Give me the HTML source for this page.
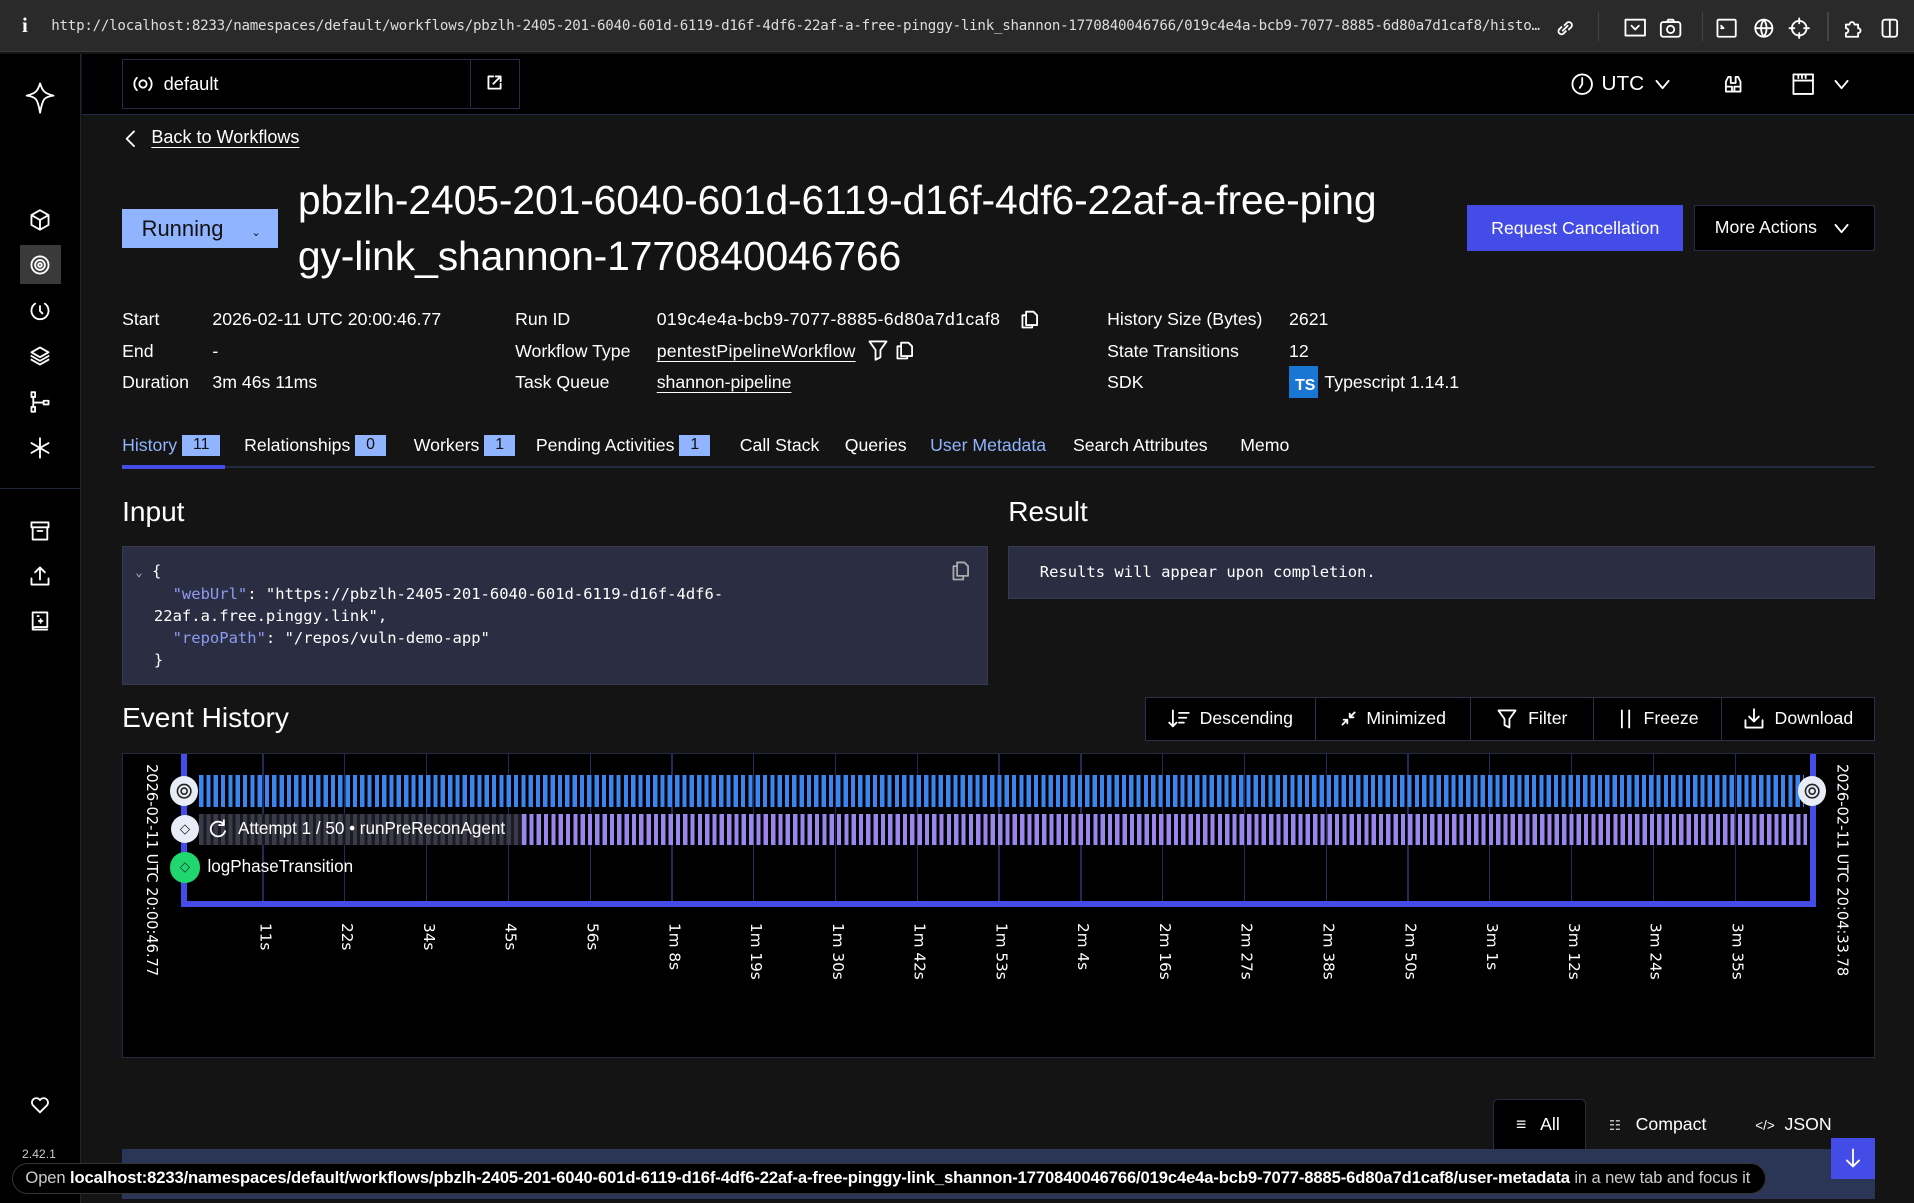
<!DOCTYPE html>
<html><head><meta charset="utf-8"><style>
*{box-sizing:border-box;margin:0;padding:0}
html,body{width:1914px;height:1203px;overflow:hidden;background:#141414}
#w{zoom:1.22066;width:1568px;height:986px;position:relative;font-family:"Liberation Sans",sans-serif;color:#fff;background:#141414;overflow:hidden}
.a{position:absolute}
.mono{font-family:"DejaVu Sans Mono","Liberation Mono",monospace}
svg{display:block}
.ic{stroke:#fff;fill:none;stroke-width:1.5;stroke-linecap:round;stroke-linejoin:round}
.lbl{font-size:14.5px;color:#fff}
.tab{position:absolute;top:356px;font-size:14.5px}
.badge{display:inline-block;background:#90b4ff;color:#111;font-size:13px;padding:0 9px;height:17px;line-height:17px;margin-left:4px;vertical-align:1px}
.tick{position:absolute;top:618px;width:1px;height:122px;background:#262a5a}
.tl{position:absolute;top:756px;writing-mode:vertical-rl;font-size:12.5px;color:#fff;font-family:"DejaVu Sans",sans-serif}
.btn{position:absolute;top:571px;height:36px;border:1px solid #2b3148;background:#000;font-size:14.5px;display:flex;align-items:center;justify-content:center;gap:8px}
</style></head><body><div id="w">
<div class="a" style="left:0;top:0;width:1568px;height:43px;background:#2a2a2a;border-bottom:1px solid #3a3a3a"></div>
<div class="a" style="left:18px;top:12px;font-size:17px;font-weight:bold;font-family:'Liberation Serif',serif">i</div>
<div class="a mono" style="left:42px;top:15px;font-size:11.6px;color:#ddd;white-space:nowrap;letter-spacing:-0.2px">http://localhost:8233/namespaces/default/workflows/pbzlh-2405-201-6040-601d-6119-d16f-4df6-22af-a-free-pinggy-link_shannon-1770840046766/019c4e4a-bcb9-7077-8885-6d80a7d1caf8/histo…</div>
<svg class="a" style="left:1272px;top:13px" width="20" height="20" viewBox="0 0 20 20"><path class="ic" d="M8 12l4-4M7 9l-2 2a2.5 2.5 0 003.5 3.5l2-2M13 11l2-2a2.5 2.5 0 00-3.5-3.5l-2 2"/></svg>
<div class="a" style="left:1309px;top:10px;width:1px;height:24px;background:#444"></div>
<svg class="a" style="left:1330px;top:13px" width="80" height="20" viewBox="0 0 80 20"><rect class="ic" x="2" y="3" width="16" height="13"/><path class="ic" d="M7 8l3 3 3-3"/><rect class="ic" x="31" y="5" width="16" height="12" rx="2"/><circle class="ic" cx="39" cy="11" r="3"/><path class="ic" d="M36 5l1-2h4l1 2"/></svg>
<div class="a" style="left:1394px;top:10px;width:1px;height:24px;background:#444"></div>
<svg class="a" style="left:1405px;top:13px" width="80" height="20" viewBox="0 0 80 20"><rect class="ic" x="2" y="3" width="15" height="14" rx="1"/><path class="ic" d="M5 8l2 2-2 0"/><circle class="ic" cx="40" cy="10" r="7"/><path class="ic" d="M33 10h14M40 3c-3 4-3 10 0 14M40 3c3 4 3 10 0 14"/><circle class="ic" cx="69" cy="10" r="6"/><path class="ic" d="M69 2v4M69 14v4M61 10h4M73 10h4"/></svg>
<div class="a" style="left:1497px;top:10px;width:1px;height:24px;background:#444"></div>
<svg class="a" style="left:1508px;top:13px" width="50" height="20" viewBox="0 0 50 20"><path class="ic" d="M4 7h3a2 2 0 014 0h3v3a2 2 0 010 4v3H4v-3a2 2 0 000-4z"/><rect class="ic" x="34" y="3" width="12" height="14" rx="2"/><path class="ic" d="M40 3v14"/></svg>

<div class="a" style="left:0;top:44px;width:66px;height:942px;background:#000;border-right:1px solid #1f2438"></div>
<svg class="a" style="left:19px;top:66px" width="28" height="28" viewBox="0 0 28 28"><path class="ic" stroke-width="2" d="M14 2c2 6 3 8 11 10-8 1-9 3-11 14-2-11-3-13-11-14 8-2 9-4 11-10z"/></svg>
<svg class="a" style="left:24px;top:171px" width="18" height="18" viewBox="0 0 18 18"><path class="ic" d="M9 1l7 4v8l-7 4-7-4V5zM2 5l7 4 7-4M9 9v8"/></svg>
<div class="a" style="left:16px;top:201px;width:34px;height:32px;background:#3a3a3a"></div>
<svg class="a" style="left:24px;top:208px" width="18" height="18" viewBox="0 0 18 18"><circle class="ic" cx="9" cy="9" r="7"/><circle class="ic" cx="9" cy="9" r="4"/><circle class="ic" cx="9" cy="9" r="1.5"/></svg>
<svg class="a" style="left:24px;top:246px" width="18" height="18" viewBox="0 0 18 18"><path class="ic" d="M5 3a7 7 0 108 0M9 5v4l2 2"/></svg>
<svg class="a" style="left:24px;top:283px" width="18" height="18" viewBox="0 0 18 18"><path class="ic" d="M9 2l7 4-7 4-7-4zM2 9l7 4 7-4M2 12l7 4 7-4"/></svg>
<svg class="a" style="left:24px;top:320px" width="18" height="18" viewBox="0 0 18 18"><rect class="ic" x="2" y="1" width="3" height="4"/><rect class="ic" x="2" y="13" width="3" height="4"/><rect class="ic" x="12" y="8" width="4" height="3"/><path class="ic" d="M3.5 5v8M3.5 9.5H12"/></svg>
<svg class="a" style="left:24px;top:358px" width="18" height="18" viewBox="0 0 18 18"><path class="ic" d="M9 1v16M2 5l14 8M16 5L2 13"/></svg>
<div class="a" style="left:0;top:400px;width:66px;height:1px;background:#1f2438"></div>
<svg class="a" style="left:24px;top:426px" width="18" height="18" viewBox="0 0 18 18"><rect class="ic" x="2" y="2" width="14" height="4"/><path class="ic" d="M3 6v10h12V6M7 9h4"/></svg>
<svg class="a" style="left:24px;top:463px" width="18" height="18" viewBox="0 0 18 18"><path class="ic" d="M9 12V2M5 6l4-4 4 4M2 11v5h14v-5"/></svg>
<svg class="a" style="left:24px;top:500px" width="18" height="18" viewBox="0 0 18 18"><path class="ic" d="M3 2h12v12H5a2 2 0 00-2 2zM3 16h12M7 5h1M11 9h-3M9.5 7.5v3"/></svg>
<svg class="a" style="left:24px;top:896px" width="18" height="18" viewBox="0 0 18 18"><path class="ic" d="M9 15L3 9a3.5 3.5 0 016-4 3.5 3.5 0 016 4z"/></svg>
<div class="a" style="left:18px;top:940px;font-size:10px;color:#ccc">2.42.1</div>

<div class="a" style="left:67px;top:44px;width:1501px;height:50px;background:#000;border-bottom:1px solid #1f2a44"></div>
<div class="a" style="left:100px;top:48px;width:326px;height:41px;border:1px solid #262c48;background:#000"></div>
<div class="a" style="left:385px;top:49px;width:1px;height:39px;background:#262c48"></div>
<svg class="a" style="left:108px;top:60px" width="18" height="18" viewBox="0 0 18 18"><circle class="ic" cx="9" cy="9" r="3"/><path class="ic" d="M4 4a7 7 0 000 10M14 4a7 7 0 010 10"/></svg>
<div class="a" style="left:134px;top:60px;font-size:15px">default</div>
<svg class="a" style="left:398px;top:61px" width="14" height="14" viewBox="0 0 14 14"><path class="ic" stroke-width="1.2" d="M6 2H2v10h10V8M8 2h4v4M12 2L6 8"/></svg>
<svg class="a" style="left:1286px;top:59px" width="20" height="20" viewBox="0 0 20 20"><circle class="ic" cx="10" cy="10" r="8"/><path class="ic" d="M10 5v5l-2 3"/></svg>
<div class="a" style="left:1312px;top:59px;font-size:17px">UTC</div>
<svg class="a" style="left:1355px;top:62px" width="14" height="14" viewBox="0 0 14 14"><path class="ic" d="M2 4l5 6 5-6"/></svg>
<svg class="a" style="left:1410px;top:59px" width="20" height="20" viewBox="0 0 20 20"><path class="ic" d="M4 16V8l2-4h2v5h4V4h2l2 4v8zM4 12h5v4M11 16v-4h5"/></svg>
<svg class="a" style="left:1467px;top:59px" width="20" height="20" viewBox="0 0 20 20"><rect class="ic" x="2" y="2" width="16" height="16"/><path class="ic" d="M2 7h16M6 2v3M9 2v3M12 2v3"/></svg>
<svg class="a" style="left:1502px;top:62px" width="14" height="14" viewBox="0 0 14 14"><path class="ic" d="M2 4l5 6 5-6"/></svg>

<svg class="a" style="left:101px;top:106px" width="12" height="16" viewBox="0 0 12 16"><path class="ic" d="M9 2L3 8l6 6"/></svg>
<div class="a" style="left:124px;top:104px;font-size:14.8px;text-decoration:underline;text-underline-offset:3px">Back to Workflows</div>

<div class="a" style="left:100px;top:171px;width:128px;height:32px;background:#90b4ff;color:#111;font-size:18px;line-height:32px;padding-left:16px">Running <span style="font-size:9px;margin-left:18px">⌄</span></div>
<div class="a" style="left:244px;top:141px;width:960px;font-size:33.5px;line-height:46px;white-space:nowrap;letter-spacing:-0.1px">pbzlh-2405-201-6040-601d-6119-d16f-4df6-22af-a-free-ping<br>gy-link_shannon-1770840046766</div>
<div class="a" style="left:1202px;top:168px;width:177px;height:38px;background:#444ce7;font-size:14.5px;line-height:38px;text-align:center">Request Cancellation</div>
<div class="a" style="left:1388px;top:168px;width:148px;height:38px;background:#000;border:1px solid #262c48;font-size:14.5px;line-height:36px;padding-left:16px">More Actions</div>
<svg class="a" style="left:1502px;top:180px" width="14" height="14" viewBox="0 0 14 14"><path class="ic" d="M2 4l5 6 5-6"/></svg>

<div class="a lbl" style="left:100px;top:253px">Start</div>
<div class="a lbl" style="left:174px;top:253px">2026-02-11 UTC 20:00:46.77</div>
<div class="a lbl" style="left:100px;top:279px">End</div>
<div class="a lbl" style="left:174px;top:279px">-</div>
<div class="a lbl" style="left:100px;top:305px">Duration</div>
<div class="a lbl" style="left:174px;top:305px">3m 46s 11ms</div>
<div class="a lbl" style="left:422px;top:253px">Run ID</div>
<div class="a lbl" style="left:538px;top:253px;letter-spacing:0.3px">019c4e4a-bcb9-7077-8885-6d80a7d1caf8</div>
<svg class="a" style="left:836px;top:252px" width="16" height="18" viewBox="0 0 16 18"><path class="ic" d="M5 3h6l3 3v8H5zM5 6H2v10h8v-2"/></svg>
<div class="a lbl" style="left:422px;top:279px">Workflow Type</div>
<div class="a lbl" style="left:538px;top:279px;text-decoration:underline;text-underline-offset:3px;letter-spacing:0.2px">pentestPipelineWorkflow</div>
<svg class="a" style="left:710px;top:278px" width="18" height="18" viewBox="0 0 18 18"><path class="ic" d="M2 2h14l-5 7v6l-4 2V9z"/></svg>
<svg class="a" style="left:733px;top:278px" width="16" height="18" viewBox="0 0 16 18"><path class="ic" d="M5 3h6l3 3v8H5zM5 6H2v10h8v-2"/></svg>
<div class="a lbl" style="left:422px;top:305px">Task Queue</div>
<div class="a lbl" style="left:538px;top:305px;text-decoration:underline;text-underline-offset:3px">shannon-pipeline</div>
<div class="a lbl" style="left:907px;top:253px">History Size (Bytes)</div>
<div class="a lbl" style="left:1056px;top:253px">2621</div>
<div class="a lbl" style="left:907px;top:279px">State Transitions</div>
<div class="a lbl" style="left:1056px;top:279px">12</div>
<div class="a lbl" style="left:907px;top:305px">SDK</div>
<div class="a" style="left:1056px;top:300px;width:24px;height:26px;background:#1976d2;font-size:13px;font-weight:bold;padding:9px 0 0 5px;line-height:14px">TS</div>
<div class="a lbl" style="left:1085px;top:305px">Typescript 1.14.1</div>

<div class="tab" style="left:100px;color:#90b4ff">History<span class="badge">11</span></div>
<div class="tab" style="left:200px">Relationships<span class="badge">0</span></div>
<div class="tab" style="left:339px">Workers<span class="badge">1</span></div>
<div class="tab" style="left:439px">Pending Activities<span class="badge">1</span></div>
<div class="tab" style="left:606px">Call Stack</div>
<div class="tab" style="left:692px">Queries</div>
<div class="tab" style="left:762px;color:#90b4ff">User Metadata</div>
<div class="tab" style="left:879px">Search Attributes</div>
<div class="tab" style="left:1016px">Memo</div>
<div class="a" style="left:100px;top:382px;width:1436px;height:1px;background:#232a3e"></div>
<div class="a" style="left:100px;top:381px;width:84px;height:3px;background:#444ce7"></div>

<div class="a" style="left:100px;top:406px;font-size:23px">Input</div>
<div class="a" style="left:826px;top:406px;font-size:23px">Result</div>
<div class="a mono" style="left:100px;top:447px;width:709px;height:114px;background:#2b2e42;border:1px solid #353a52;font-size:12.7px;line-height:18px;padding:12px 0 0 10px;white-space:pre;color:#fff"><span style="font-size:10px;color:#bbb">⌄</span> {
    <span style="color:#8c9cf0">"webUrl"</span>: "https://pbzlh-2405-201-6040-601d-6119-d16f-4df6-
  22af.a.free.pinggy.link",
    <span style="color:#8c9cf0">"repoPath"</span>: "/repos/vuln-demo-app"
  }</div>
<svg class="a" style="left:779px;top:459px" width="16" height="18" viewBox="0 0 16 18"><path class="ic" style="stroke:#aaa" d="M5 2h6l3 3v8H5zM5 5H2v11h8v-3"/></svg>
<div class="a mono" style="left:826px;top:447px;width:710px;height:44px;background:#2b2e42;border:1px solid #353a52;font-size:12.7px;line-height:42px;padding-left:25px">Results will appear upon completion.</div>

<div class="a" style="left:100px;top:575px;font-size:23px">Event History</div>
<div class="btn" style="left:938px;width:140px"><svg width="18" height="18" viewBox="0 0 18 18"><path class="ic" d="M4 2v13M1 12l3 3 3-3M9 4h8M9 8h6M9 12h4"/></svg>Descending</div>
<div class="btn" style="left:1077px;width:128px"><svg width="14" height="14" viewBox="0 0 14 14"><path class="ic" d="M2 12l4-4M3 8h3v3M12 2L8 6M11 6H8V3"/></svg>Minimized</div>
<div class="btn" style="left:1204px;width:102px"><svg width="18" height="18" viewBox="0 0 18 18"><path class="ic" d="M2 2h14l-5 7v7l-4-2V9z"/></svg>Filter</div>
<div class="btn" style="left:1305px;width:106px"><svg width="14" height="18" viewBox="0 0 14 18"><path class="ic" stroke-width="2.4" d="M4 2v14M10 2v14"/></svg>Freeze</div>
<div class="btn" style="left:1410px;width:126px"><svg width="18" height="18" viewBox="0 0 18 18"><path class="ic" d="M9 1v10M5 7l4 4 4-4M2 10v6h14v-6"/></svg>Download</div>

<div class="a" style="left:100px;top:617px;width:1436px;height:250px;background:#000;border:1px solid #232a3e"></div>
<div class="tick" style="left:215px"></div><div class="tick" style="left:282px"></div><div class="tick" style="left:349px"></div><div class="tick" style="left:416px"></div><div class="tick" style="left:483px"></div><div class="tick" style="left:550px"></div><div class="tick" style="left:617px"></div><div class="tick" style="left:684px"></div><div class="tick" style="left:751px"></div><div class="tick" style="left:818px"></div><div class="tick" style="left:885px"></div><div class="tick" style="left:952px"></div><div class="tick" style="left:1019px"></div><div class="tick" style="left:1086px"></div><div class="tick" style="left:1153px"></div><div class="tick" style="left:1220px"></div><div class="tick" style="left:1287px"></div><div class="tick" style="left:1354px"></div><div class="tick" style="left:1421px"></div>
<div class="a" style="left:163px;top:635px;width:1315px;height:26px;background:repeating-linear-gradient(90deg,#3a86f0 0 3.5px,transparent 3.5px 6px)"></div>
<div class="a" style="left:163px;top:667px;width:265px;height:25px;background:repeating-linear-gradient(90deg,#3a3a48 0 3.5px,#1a1a22 3.5px 6px)"></div>
<div class="a" style="left:428px;top:667px;width:1052px;height:25px;background:repeating-linear-gradient(90deg,#9b86f0 0 3.5px,transparent 3.5px 6px)"></div>
<div class="a" style="left:148px;top:618px;width:5px;height:124px;background:#444ce7"></div>
<div class="a" style="left:148px;top:738px;width:1340px;height:5px;background:#444ce7"></div>
<div class="a" style="left:1483px;top:618px;width:5px;height:125px;background:#444ce7"></div>
<div class="a" style="left:139px;top:636px;width:23px;height:24px;border-radius:50%;background:#e8ecf6"></div>
<svg class="a" style="left:143px;top:641px" width="15" height="15" viewBox="0 0 15 15"><circle cx="7.5" cy="7.5" r="5.5" fill="none" stroke="#222" stroke-width="1.3"/><circle cx="7.5" cy="7.5" r="2.5" fill="none" stroke="#222" stroke-width="1.3"/></svg>
<div class="a" style="left:1473px;top:636px;width:23px;height:24px;border-radius:50%;background:#e8ecf6"></div>
<svg class="a" style="left:1477px;top:641px" width="15" height="15" viewBox="0 0 15 15"><circle cx="7.5" cy="7.5" r="5.5" fill="none" stroke="#222" stroke-width="1.3"/><circle cx="7.5" cy="7.5" r="2.5" fill="none" stroke="#222" stroke-width="1.3"/></svg>
<div class="a" style="left:140px;top:668px;width:23px;height:23px;border-radius:50%;background:#e8ecf6;color:#222;font-size:11px;text-align:center;line-height:23px">◇</div>
<svg class="a" style="left:170px;top:671px" width="17" height="17" viewBox="0 0 17 17"><path class="ic" stroke-width="1.7" d="M13 4.5A6 6 0 1014 10M13 1v4h-4"/></svg>
<div class="a" style="left:195px;top:671px;font-size:14px">Attempt 1 / 50 • runPreReconAgent</div>
<div class="a" style="left:139px;top:698px;width:25px;height:25px;border-radius:50%;background:#1fd66f;color:#133;font-size:11px;text-align:center;line-height:25px">◇</div>
<div class="a" style="left:170px;top:702px;font-size:14px">logPhaseTransition</div>
<div class="tl" style="left:117px;top:626px;font-size:12px">2026-02-11 UTC 20:00:46.77</div>
<div class="tl" style="left:1502px;top:626px;font-size:12px">2026-02-11 UTC 20:04:33.78</div>
<div class="tl" style="left:210px">11s</div><div class="tl" style="left:277px">22s</div><div class="tl" style="left:344px">34s</div><div class="tl" style="left:411px">45s</div><div class="tl" style="left:478px">56s</div><div class="tl" style="left:545px">1m 8s</div><div class="tl" style="left:612px">1m 19s</div><div class="tl" style="left:679px">1m 30s</div><div class="tl" style="left:746px">1m 42s</div><div class="tl" style="left:813px">1m 53s</div><div class="tl" style="left:880px">2m 4s</div><div class="tl" style="left:947px">2m 16s</div><div class="tl" style="left:1014px">2m 27s</div><div class="tl" style="left:1081px">2m 38s</div><div class="tl" style="left:1148px">2m 50s</div><div class="tl" style="left:1215px">3m 1s</div><div class="tl" style="left:1282px">3m 12s</div><div class="tl" style="left:1349px">3m 24s</div><div class="tl" style="left:1416px">3m 35s</div>

<div class="a" style="left:1223px;top:900px;width:76px;height:42px;background:#000;border:1px solid #262c48;border-bottom:none;border-radius:4px 4px 0 0"></div>
<div class="a" style="left:1242px;top:913px;font-size:14.5px">≡&nbsp;&nbsp; All</div>
<div class="a" style="left:1318px;top:913px;font-size:14.5px"><span style="font-size:11px;color:#ccc">☷</span>&nbsp;&nbsp; Compact</div>
<div class="a" style="left:1438px;top:913px;font-size:14.5px"><span style="font-size:11px">&lt;/&gt;</span>&nbsp; JSON</div>
<div class="a" style="left:100px;top:941px;width:1436px;height:45px;background:#2b3656"></div>
<div class="a" style="left:100px;top:982px;width:1436px;height:4px;background:#141414"></div>
<div class="a" style="left:1500px;top:932px;width:36px;height:34px;background:#444ce7"></div>
<svg class="a" style="left:1509px;top:940px" width="18" height="18" viewBox="0 0 18 18"><path class="ic" d="M9 2v14M4 11l5 5 5-5"/></svg>
<div class="a" style="left:10px;top:953px;width:1437px;height:25px;background:#000;border:1px solid #333;border-radius:13px;font-size:13.6px;line-height:23px;padding-left:10px;white-space:nowrap;color:#ccc;letter-spacing:-0.1px">Open <b style="color:#fff">localhost:8233/namespaces/default/workflows/pbzlh-2405-201-6040-601d-6119-d16f-4df6-22af-a-free-pinggy-link_shannon-1770840046766/019c4e4a-bcb9-7077-8885-6d80a7d1caf8/user-metadata</b> in a new tab and focus it</div>
</div></body></html>
